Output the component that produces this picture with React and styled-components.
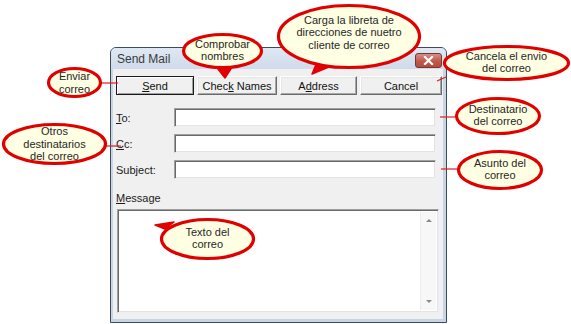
import React from 'react'
import styled, { createGlobalStyle } from 'styled-components'

const GlobalStyle = createGlobalStyle`
  html, body {
    margin: 0;
    padding: 0;
    background: #ffffff;
  }
  body {
    font-family: "Liberation Sans", Arial, sans-serif;
  }
`;

const Stage = styled.div`
  position: relative;
  width: 571px;
  height: 324px;
  overflow: hidden;
  box-sizing: border-box;
  padding: 47px 0 0 110px;
  background: #fff;
`;

const Window = styled.div`
  width: 337px;
  height: 276px;
  box-sizing: border-box;
  display: flex;
  flex-direction: column;
  border: 1px solid #3f4b5a;
  border-radius: 6px 6px 0 0;
  background: #c6d6e9;
  padding: 0 3px 3px 2px;
`;

const TitleBar = styled.div`
  height: 21px;
  display: flex;
  align-items: center;
  justify-content: space-between;
  border-radius: 5px 5px 0 0;
  background: linear-gradient(#dfe8f3, #cfdbea);
  margin: 0 -3px 0 -2px;
  padding: 0 4px 0 6px;
`;

const Title = styled.span`
  font-size: 12px;
  color: #3a3a3a;
  padding-top: 1px;
`;

const CloseButton = styled.div`
  width: 25px;
  height: 13px;
  margin-top: 4px;
  border: 1px solid #6d3a34;
  border-radius: 3px;
  background: linear-gradient(#d49084, #c25a4b 55%, #b44c3e);
  display: flex;
  align-items: center;
  justify-content: center;
`;

const Client = styled.div`
  flex: 1;
  background: #f0f0f0;
  padding: 7px 0 6px 3px;
  display: flex;
  flex-direction: column;
`;

const ButtonRow = styled.div`
  display: grid;
  grid-template-columns: 78px 80px 77px 82px;
  gap: 3px;
  height: 19px;
`;

const Button = styled.div`
  box-sizing: border-box;
  display: flex;
  align-items: center;
  justify-content: center;
  font-size: 11px;
  color: #111;
  background: #f0f0f0;
  border: 1px solid;
  border-color: ${(p) => (p.$default ? '#1a1a1a' : '#ffffff #6b6b6b #6b6b6b #ffffff')};
  box-shadow: ${(p) =>
    p.$default
      ? 'inset 1px 1px #ffffff, inset -1px -1px #a0a0a0'
      : 'inset -1px -1px #a8a8a8, inset 1px 1px #e6e6e6'};
`;

const Form = styled.div`
  margin-top: 13px;
  display: grid;
  grid-template-columns: 58px 262px;
  grid-auto-rows: 19px;
  row-gap: 7px;
`;

const Label = styled.div`
  font-size: 11px;
  color: #1a1a1a;
  display: flex;
  align-items: center;
`;

const Field = styled.div`
  box-sizing: border-box;
  background: #fff;
  border: 1px solid;
  border-color: #a0a0a0 #f0f0f0 #f0f0f0 #a0a0a0;
  box-shadow: inset 1px 1px #696969, inset -1px -1px #e3e3e3;
`;

const MessageLabel = styled(Label)`
  margin-top: 12px;
  height: 14px;
`;

const MessageBox = styled(Field)`
  margin: 4px 0 0 1px;
  width: 322px;
  height: 104px;
  display: flex;
  justify-content: flex-end;
  padding: 2px;
`;

const Scrollbar = styled.div`
  width: 15px;
  background: #f7f7f7;
  border-left: 1px solid #ececec;
  display: flex;
  flex-direction: column;
  justify-content: space-between;
  align-items: center;
  padding: 7px 0;
`;

const Arrow = styled.span`
  width: 0;
  height: 0;
  border-left: 3px solid transparent;
  border-right: 3px solid transparent;
  ${(p) => (p.$down ? 'border-top: 3px solid #8a8a8a;' : 'border-bottom: 3px solid #8a8a8a;')}
`;

const Bubble = styled.div`
  position: absolute;
  box-sizing: border-box;
  display: flex;
  align-items: center;
  justify-content: center;
  text-align: center;
  font-size: 11px;
  line-height: 12.5px;
  color: #262626;
  padding-bottom: ${(p) => p.$lift || 0}px;
`;

const BubbleShape = styled.svg`
  position: absolute;
  left: 0;
  top: 0;
  overflow: visible;
  z-index: 0;
`;

const BubbleText = styled.span`
  position: relative;
  z-index: 1;
  white-space: pre-line;
`;

const Callout = ({ x, y, w, h, line, wedge, lift, children }) => (
  <Bubble style={{ left: x, top: y, width: w, height: h }} $lift={lift}>
    <BubbleShape width={w} height={h}>
      {line && (
        <line
          x1={line[0] - x}
          y1={line[1] - y}
          x2={line[2] - x}
          y2={line[3] - y}
          stroke="#e21a1a"
          strokeWidth="1.2"
        />
      )}
      {wedge && (
        <polygon
          points={wedge.map(([px, py]) => `${px - x},${py - y}`).join(' ')}
          fill="#e00000"
          stroke="#e00000"
          strokeWidth="1.5"
          strokeLinejoin="round"
        />
      )}
      <ellipse
        cx={w / 2}
        cy={h / 2}
        rx={w / 2 - 1.5}
        ry={h / 2 - 1.5}
        fill="#ffffe3"
        stroke="#e00000"
        strokeWidth="3.2"
      />
    </BubbleShape>
    <BubbleText>{children}</BubbleText>
  </Bubble>
);

const App = () => {
  return (
    <Stage>
      <GlobalStyle />
      <Window>
        <TitleBar>
          <Title>Send Mail</Title>
          <CloseButton>
            <svg width="11" height="9" viewBox="0 0 11 9">
              <path d="M2 1 L9 8 M9 1 L2 8" stroke="#fff" strokeWidth="2.2" strokeLinecap="square" />
            </svg>
          </CloseButton>
        </TitleBar>
        <Client>
          <ButtonRow>
            <Button $default><span><u>S</u>end</span></Button>
            <Button><span>Chec<u>k</u> Names</span></Button>
            <Button><span>A<u>d</u>dress</span></Button>
            <Button><span>Cancel</span></Button>
          </ButtonRow>
          <Form>
            <Label><span><u>T</u>o:</span></Label>
            <Field />
            <Label><span><u>C</u>c:</span></Label>
            <Field />
            <Label>Subject:</Label>
            <Field />
          </Form>
          <MessageLabel><span><u>M</u>essage</span></MessageLabel>
          <MessageBox>
            <Scrollbar>
              <Arrow />
              <Arrow $down />
            </Scrollbar>
          </MessageBox>
        </Client>
      </Window>

      <Callout x={47} y={67} w={55} h={31} line={[101, 83, 118, 83]}>
        {'Enviar\ncorreo'}
      </Callout>
      <Callout x={2} y={123} w={105} h={42} line={[106, 146, 121, 146]}>
        {'Otros\ndestinatarios\ndel correo'}
      </Callout>
      <Callout x={182} y={33} w={81} h={36} wedge={[[214, 64], [225, 78], [234, 64]]} lift={2}>
        {'Comprobar\nnombres'}
      </Callout>
      <Callout x={277} y={4} w={144} h={65} wedge={[[318, 60], [312, 74], [336, 64]]} lift={8}>
        {'Carga la libreta de\ndirecciones de nuetro\ncliente de correo'}
      </Callout>
      <Callout x={443} y={45} w={127} h={36} line={[446, 77, 437, 81]} lift={2}>
        {'Cancela el envio\ndel correo'}
      </Callout>
      <Callout x={455} y={97} w={86} h={38} line={[440, 117, 456, 117]} lift={2}>
        {'Destinatario\ndel correo'}
      </Callout>
      <Callout x={457} y={150} w={86} h={40} line={[441, 169, 458, 169]} lift={2}>
        {'Asunto del\ncorreo'}
      </Callout>
      <Callout x={160} y={218} w={95} h={42} wedge={[[165, 229], [155, 225], [174, 222]]} lift={2}>
        {'Texto del\ncorreo'}
      </Callout>
    </Stage>
  );
};

export default App;
